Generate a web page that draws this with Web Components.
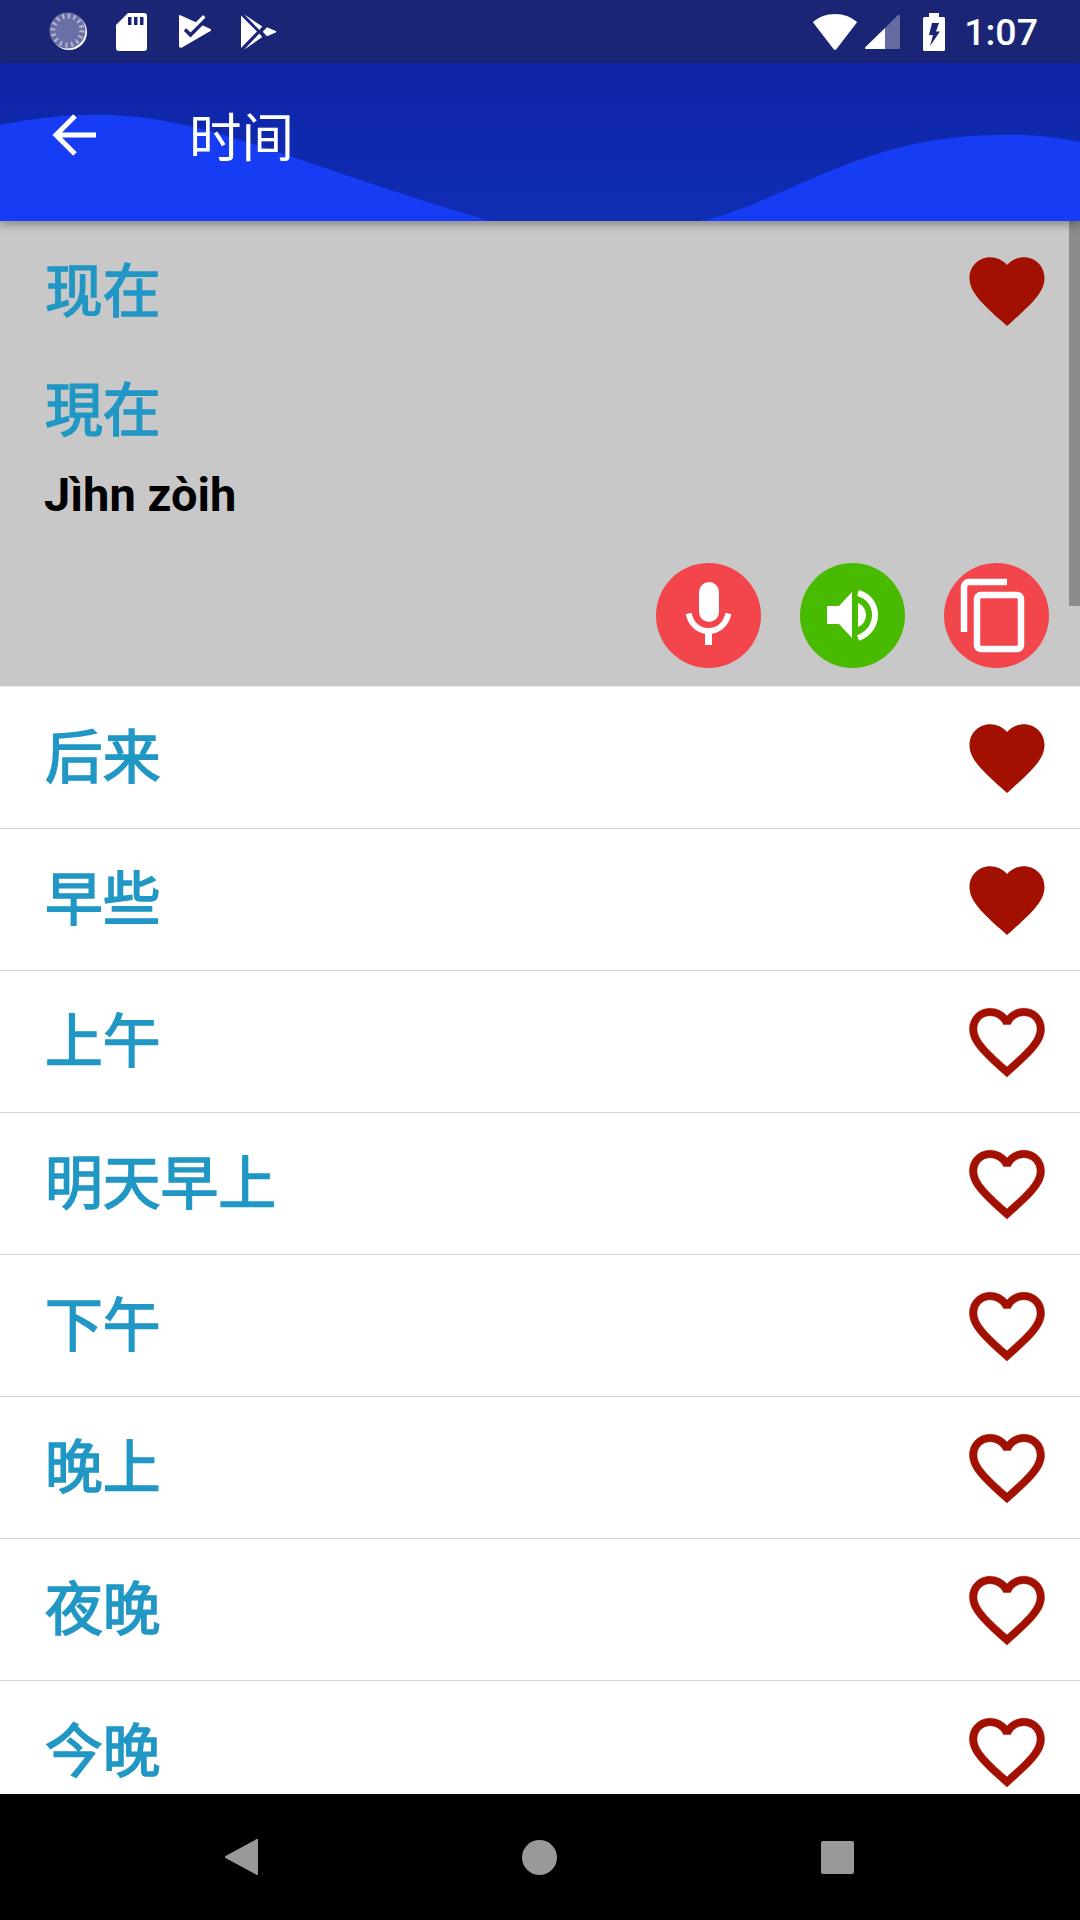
<!DOCTYPE html>
<html lang="zh">
<head>
<meta charset="utf-8">
<title>时间</title>
<style>
    html, body { margin: 0; height: 100%; background: #fff; }
    body { font-family: Roboto, "Noto Sans CJK SC", sans-serif; }
</style>
</head>
<body>
<phone-screen>
    <status-bar slot="status">1:07</status-bar>
    <app-bar slot="bar">时间</app-bar>
    <word-detail slot="detail" liked>
        <span slot="simplified">现在</span>
        <span slot="traditional">現在</span>
        <span slot="roman">Jìhn zòih</span>
    </word-detail>
    <word-row slot="list" liked>后来</word-row>
    <word-row slot="list" liked>早些</word-row>
    <word-row slot="list">上午</word-row>
    <word-row slot="list">明天早上</word-row>
    <word-row slot="list">下午</word-row>
    <word-row slot="list">晚上</word-row>
    <word-row slot="list">夜晚</word-row>
    <word-row slot="list">今晚</word-row>
    <nav-bar slot="nav"></nav-bar>
</phone-screen>

<script>
function def(name, html, attrs = [], render) {
    customElements.define(name, class extends HTMLElement {
        static get observedAttributes() { return attrs }
        constructor() {
            super()
            this.attachShadow({ mode: "open" }).innerHTML = html
        }
        connectedCallback() { render && render(this) }
        attributeChangedCallback() { render && render(this) }
    })
}

const HEART = "M12 21.35l-1.45-1.32C5.4 15.36 2 12.28 2 8.5 2 5.42 4.42 3 7.5 3c1.74 0 3.41.81 4.5 2.09C13.09 3.81 14.76 3 16.5 3 19.58 3 22 5.42 22 8.5c0 3.78-3.4 6.86-8.55 11.54L12 21.35z"
const HEART_LINE = "M16.5 3c-1.74 0-3.41.81-4.5 2.09C10.91 3.81 9.24 3 7.5 3 4.42 3 2 5.42 2 8.5c0 3.78 3.4 6.86 8.55 11.54L12 21.35l1.45-1.32C18.6 15.36 22 12.28 22 8.5 22 5.42 19.58 3 16.5 3zm-4.4 15.55l-.1.1-.1-.1C7.14 14.24 4 11.39 4 8.5 4 6.5 5.5 5 7.5 5c1.54 0 3.04.99 3.57 2.36h1.87C13.46 5.99 14.96 5 16.5 5c2 0 3.5 1.5 3.5 3.5 0 2.89-3.14 5.74-7.9 10.05z"

def("phone-screen", /*html*/`
    <style>
        :host { display: flex; flex-direction: column; width: 1080px; height: 1920px; overflow: hidden; position: relative; }
        .list { flex: 1; min-height: 0; overflow: hidden; display: flex; flex-direction: column; }
        ::slotted([slot=list]) { flex: none; }
        ::slotted([slot=bar]) { z-index: 2; }
    </style>
    <slot name="status"></slot>
    <slot name="bar"></slot>
    <slot name="detail"></slot>
    <div class="list"><slot name="list"></slot></div>
    <slot name="nav"></slot>
`)

def("status-bar", /*html*/`
    <style>
        :host { display: flex; align-items: center; height: 63px; background: #1b2576; color: #fff; flex: none; box-sizing: border-box; font: 500 37.5px Roboto, sans-serif; }
        svg { display: block; flex: none; }
        .left { display: flex; align-items: center; padding-left: 48px; }
        .right { margin-left: auto; display: flex; align-items: center; padding-right: 42px; }
        .time { margin-left: 19px; }
    </style>
    <div class="left">
        <svg width="40" height="40" viewBox="0 0 40 40" style="margin-right:28px">
            <circle cx="21" cy="20" r="18" fill="#fff"/>
            <circle cx="19.5" cy="18.500" r="18" fill="#6a70a6"/>
            <circle cx="19.500" cy="18.500" r="14.500" fill="none" stroke="#b4b7d2" stroke-width="5" stroke-dasharray="2 3.690"/>
        </svg>
        <svg width="31" height="38" viewBox="0 0 31 38" style="margin-right:32px">
            <path fill="#fff" d="M12 0h16a3 3 0 0 1 3 3v32a3 3 0 0 1-3 3H3a3 3 0 0 1-3-3V12z"/>
            <path fill="#1b2576" d="M12 4h3.500v8H12zM18 4h3.500v8H18zM24 4h3.500v8H24z"/>
        </svg>
        <svg width="33" height="36" viewBox="0 0 33 36" style="margin-right:29px">
            <path fill="#fff" d="M1.500 1.200L30.500 14.500a1.500 1.500 0 0 1 0 3L3 33.500a2 2 0 0 1-3-1.500V2.200a1 1 0 0 1 1.500-1z"/>
            <path fill="none" stroke="#fff" stroke-width="4" d="M15 13L25.500 2.500"/>
            <path fill="none" stroke="#1b2576" stroke-width="3.500" d="M6 15.500l5.500 5.500L29 3.500"/>
        </svg>
        <svg width="36" height="38" viewBox="0 0 36 38">
            <path fill="#fff" d="M0 2.500L16 18.500 0 35zM3 1.300L21.300 13.500 18.300 17zM3 36.800L21.300 24 18.300 20.500zM26 14.200L34.800 18a.8.8 0 0 1 0 1.500L26 23.200 21.700 18.800z"/>
        </svg>
    </div>
    <div class="right">
        <svg width="44" height="36" viewBox="0 0 44 36" style="margin-right:8px">
            <path fill="#fff" d="M22 0C13 0 6 3 .5 7.500a1 1 0 0 0 0 1.500L20.500 35a2 2 0 0 0 3 0L43.500 9a1 1 0 0 0 0-1.500C38 3 31 0 22 0z"/>
        </svg>
        <svg width="35" height="35" viewBox="0 0 35 35" style="margin-right:23px">
            <path fill="#666ca3" d="M20 14L33 1a1.200 1.200 0 0 1 2 1v32a1 1 0 0 1-1 1H20z"/>
            <path fill="#fff" d="M20 14v21H1a1 1 0 0 1-1-1.500z"/>
        </svg>
        <svg width="22" height="38" viewBox="0 0 22 38">
            <path fill="#fff" d="M6 0h10v4h4.500a1.500 1.500 0 0 1 1.500 1.500V36.500a1.500 1.500 0 0 1-1.500 1.500H1.500A1.500 1.500 0 0 1 0 36.500V5.500A1.500 1.500 0 0 1 1.500 4H6z"/>
            <path fill="#1b2576" d="M9 10h7l-3 8.500h4L7 33l3-11H6z"/>
        </svg>
        <span class="time"><slot></slot></span>
    </div>
`)

def("app-bar", /*html*/`
    <style>
        :host { display: flex; align-items: center; flex: none; height: 158px; position: relative; overflow: visible; color: #fff; background: #0f25a5; box-shadow: 0 4px 8px rgba(0,0,0,.3); font: 400 52.5px "Noto Sans CJK SC", sans-serif; }
        .wave { position: absolute; inset: 0; width: 100%; height: 100%; }
        .row { position: relative; display: flex; align-items: center; padding: 0 0 16px 52px; }
        .title { margin-left: 93px; }
        svg.back { display: block; margin-top: 4px; }
    </style>
    <svg class="wave" viewBox="0 63 1080 158" preserveAspectRatio="none">
        <defs>
            <linearGradient id="dark" x1="0" y1="0" x2="0" y2="1">
                <stop offset="0" stop-color="#0f24a6"/>
                <stop offset="1" stop-color="#0f2db4"/>
            </linearGradient>
        </defs>
        <rect x="0" y="63" width="1080" height="158" fill="url(#dark)"/>
        <path fill="#163df4" d="M0 125C35 118 70 114 110 115C210 118 300 165 490 221H700C780 205 860 135 1000 135C1030 134 1055 137 1080 142V221H0Z"/>
    </svg>
    <div class="row">
        <svg class="back" width="44" height="44" viewBox="0 0 44 44">
            <path fill="none" stroke="#fff" stroke-width="5" d="M44 21H4M23 2L4 21l19 19"/>
        </svg>
        <span class="title"><slot></slot></span>
    </div>
`)

def("like-heart", /*html*/`
    <style>
        :host { display: block; width: 90px; height: 90px; flex: none; color: #a11000; }
        svg { display: block; width: 100%; height: 100%; fill: currentColor; }
        path.line { stroke: currentColor; stroke-width: .12; }
    </style>
    <svg viewBox="0 0 24 24"><path></path></svg>
`, ["filled"], el => {
    const path = el.shadowRoot.querySelector("path")
    const filled = el.hasAttribute("filled")
    path.setAttribute("d", filled ? HEART : HEART_LINE)
    path.setAttribute("class", filled ? "" : "line")
})

def("round-button", /*html*/`
    <style>
        :host { display: block; width: 105px; height: 105px; border-radius: 50%; background: var(--fill, #f2464c); flex: none; }
        ::slotted(svg) { display: block; }
    </style>
    <slot></slot>
`)

def("word-detail", /*html*/`
    <style>
        :host { display: block; flex: none; height: 466px; box-sizing: border-box; background: #c8c8c8; border-bottom: 1px solid #e6e6e6; position: relative; padding: 24px 0 0 44px; color: #2097c4; }
        .head { display: flex; justify-content: space-between; align-items: center; padding-right: 28px; }
        .zh { font: 400 57.75px/85px "Noto Sans CJK SC", sans-serif; padding: 0 0 7px 1px; -webkit-text-stroke: 1.6px currentColor; }
        .second { margin-top: 27px; }
        .roman { color: #000; font: 700 47px/60px Roboto, sans-serif; margin-top: 9px; }
        .actions { display: flex; gap: 39px; justify-content: flex-end; padding-right: 31px; margin-top: 38px; }
        .scroll { position: absolute; top: 0; right: 0; width: 11px; height: 385px; background: #8c8c8c; }
    </style>
    <div class="head">
        <div class="zh"><slot name="simplified"></slot></div>
        <like-heart filled></like-heart>
    </div>
    <div class="zh second"><slot name="traditional"></slot></div>
    <div class="roman"><slot name="roman"></slot></div>
    <div class="actions">
        <round-button>
            <svg width="105" height="105" viewBox="0 0 105 105">
                <rect x="43" y="19" width="20" height="40" rx="10" fill="#fff"/>
                <path fill="none" stroke="#fff" stroke-width="6" d="M32.500 50.500c3 12 11 17.500 20 17.500s17-5.500 20-17.500"/>
                <rect x="49" y="66" width="7" height="16" fill="#fff"/>
            </svg>
        </round-button>
        <round-button style="--fill:#48bb00">
            <svg width="105" height="105" viewBox="0 0 105 105">
                <path fill="#fff" d="M27 43h12l13-14v46L39 61H27z"/>
                <path fill="#fff" d="M58 40c5 2 8 7 8 12s-3 10-8 12z"/>
                <path fill="none" stroke="#fff" stroke-width="6" d="M58 30c11 3 17 12 17 22s-6 19-17 23"/>
            </svg>
        </round-button>
        <round-button>
            <svg width="105" height="105" viewBox="0 0 105 105">
                <path fill="none" stroke="#fff" stroke-width="6.500" d="M20 69V24a5 5 0 0 1 5-5h38"/>
                <rect x="33" y="32" width="44" height="54" rx="4" fill="none" stroke="#fff" stroke-width="6.500"/>
            </svg>
        </round-button>
    </div>
    <div class="scroll"></div>
`)

def("word-row", /*html*/`
    <style>
        :host { display: flex; align-items: center; justify-content: space-between; height: 142px; box-sizing: border-box; padding: 0 28px 0 45px; border-bottom: 1px solid #d4d4d4; background: #fff; color: #2097c4; font: 400 57.75px "Noto Sans CJK SC", sans-serif; -webkit-text-stroke: 1.6px currentColor; }
        span { margin-top: -9px; }
    </style>
    <span><slot></slot></span>
    <like-heart></like-heart>
`, ["liked"], el => {
    const heart = el.shadowRoot.querySelector("like-heart")
    if (el.hasAttribute("liked")) heart.setAttribute("filled", "")
})

def("nav-bar", /*html*/`
    <style>
        :host { display: flex; flex: none; height: 126px; background: #000; position: relative; z-index: 2; align-items: center; justify-content: center; gap: 264px; padding-right: 2px; box-sizing: border-box; }
        svg { display: block; fill: #999; }
    </style>
    <svg width="33" height="36" viewBox="0 0 33 36"><path stroke="#999" stroke-width="2" stroke-linejoin="round" d="M1 18L32 1v34z"/></svg>
    <svg width="35" height="35" viewBox="0 0 35 35"><circle cx="17.500" cy="17.500" r="17.500"/></svg>
    <svg width="33" height="33" viewBox="0 0 33 33"><rect width="33" height="33" rx="2"/></svg>
`)
</script>
</body>
</html>
